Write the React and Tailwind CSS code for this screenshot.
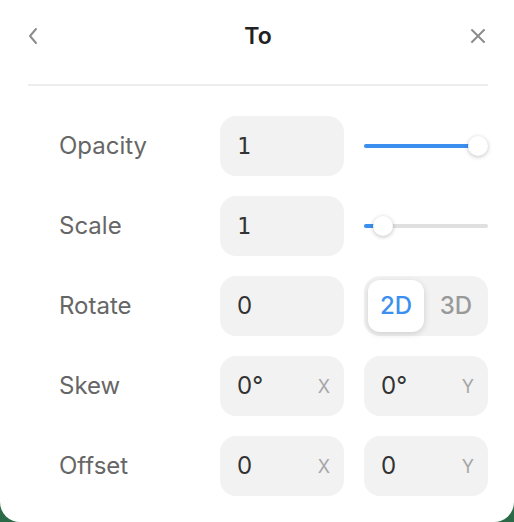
import { useState } from "react";

const font = { fontFamily: "Inter, 'Noto Sans', sans-serif" };

function Field({ value, axis }) {
  const mono = value === "1";
  return (
    <div className="flex h-[60px] w-[124px] items-center justify-between rounded-[16px] bg-[#f2f2f2] pl-[17px] pr-[14px]">
      <span
        className={`text-[#333] ${mono ? "font-['DejaVu_Sans_Mono',monospace] text-[23px]" : "text-[24px]"}`}
      >
        {value}
      </span>
      {axis && <span className="text-[18px] text-[#a6a6a6]">{axis}</span>}
    </div>
  );
}

function Slider({ pct }) {
  return (
    <div className="relative flex h-[60px] w-[124px] items-center">
      <div className="h-[4px] w-full rounded-full bg-[#e0e0e0]">
        <div className="h-full rounded-full bg-[#3b8ff0]" style={{ width: `${pct}%` }} />
      </div>
      <div
        className="absolute h-[20px] w-[20px] -translate-x-1/2 rounded-full bg-white shadow-[0_1px_4px_rgba(0,0,0,0.25)]"
        style={{ left: `${pct}%` }}
      />
    </div>
  );
}

function Row({ label, children }) {
  return (
    <div className="flex items-center">
      <div className="w-[161px] shrink-0 text-[24px] text-[#666]">{label}</div>
      <div className="flex shrink-0 gap-[20px]">{children}</div>
    </div>
  );
}

export default function App() {
  const [mode, setMode] = useState("2D");

  return (
    <div className="h-[522px] w-[514px] bg-[#2a6a46]" style={font}>
      <div className="h-full rounded-b-[20px] bg-white pl-[28px] pr-[26px]">
        <div className="grid h-[86px] grid-cols-3 items-center border-b-2 border-[#ededed] pb-[12px]">
          <svg width="12" height="18" viewBox="0 0 12 18" className="-ml-[1px] justify-self-start">
            <path d="M9 2 L3 9 L9 16" fill="none" stroke="#8c8c8c" strokeWidth="2" strokeLinecap="round" strokeLinejoin="round" />
          </svg>
          <div className="justify-self-center text-[23px] font-semibold text-[#222]">To</div>
          <svg width="16" height="16" viewBox="0 0 16 16" className="mr-[2px] justify-self-end">
            <path d="M2 2 L14 14 M14 2 L2 14" stroke="#8c8c8c" strokeWidth="2" strokeLinecap="round" />
          </svg>
        </div>

        <div className="flex flex-col gap-[20px] pl-[31px] pt-[30px]">
          <Row label="Opacity">
            <Field value="1" />
            <Slider pct={92} />
          </Row>
          <Row label="Scale">
            <Field value="1" />
            <Slider pct={15} />
          </Row>
          <Row label="Rotate">
            <Field value="0" />
            <div className="flex h-[60px] w-[124px] items-center gap-[4px] rounded-[16px] bg-[#f2f2f2] p-[4px]">
              {["2D", "3D"].map((m) => (
                <button
                  key={m}
                  onClick={() => setMode(m)}
                  className={`flex h-[52px] w-[56px] items-center justify-center rounded-[12px] text-[24px] font-medium ${
                    mode === m ? "bg-white text-[#3b8ff0] shadow-[0_2px_6px_rgba(0,0,0,0.15)]" : "text-[#999]"
                  }`}
                >
                  {m}
                </button>
              ))}
            </div>
          </Row>
          <Row label="Skew">
            <Field value="0°" axis="X" />
            <Field value="0°" axis="Y" />
          </Row>
          <Row label="Offset">
            <Field value="0" axis="X" />
            <Field value="0" axis="Y" />
          </Row>
        </div>
      </div>
    </div>
  );
}
